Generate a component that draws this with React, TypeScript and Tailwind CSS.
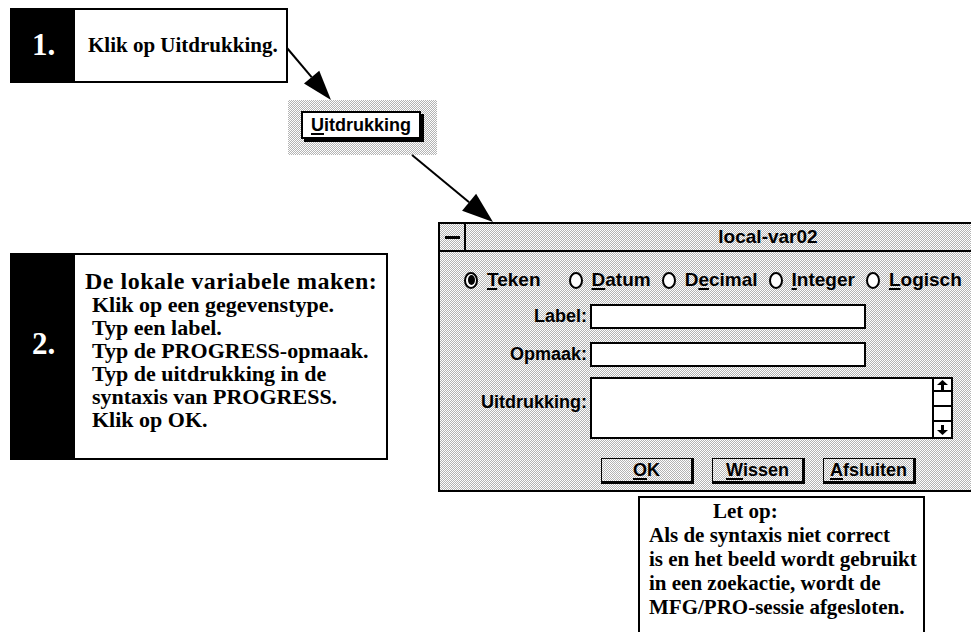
import React from "react";

const serif = "font-['Liberation_Serif','Times_New_Roman',serif] font-bold";
const sans = "font-['Liberation_Sans',Arial,sans-serif] font-bold";
const stipple =
  "bg-[image:repeating-conic-gradient(#b4b4b4_0_25%,#ffffff_0_50%)] bg-[length:2px_2px]";

function Radio({ checked }: { checked?: boolean }) {
  return (
    <span className="flex h-[17px] w-[14px] items-center justify-center rounded-[50%] border-2 border-black bg-white">
      {checked && <span className="h-[10px] w-[7px] rounded-[50%] bg-black" />}
    </span>
  );
}

function RadioItem({
  checked,
  pre,
  key1,
  post,
  className = "",
}: {
  checked?: boolean;
  pre?: string;
  key1: string;
  post: string;
  className?: string;
}) {
  return (
    <div className={`flex items-center gap-[9px] ${className}`}>
      <Radio checked={checked} />
      <span>
        {pre}
        <span className="underline decoration-2 underline-offset-2">{key1}</span>
        {post}
      </span>
    </div>
  );
}

function DlgButton({ k, rest }: { k: string; rest: string }) {
  return (
    <button
      className={`flex h-[26px] w-[93px] items-center justify-center border border-r-[3px] border-b-[3px] border-black ${stipple}`}
    >
      <span className="underline decoration-2 underline-offset-2">{k}</span>
      {rest}
    </button>
  );
}

function Arrow({ x1, y1, x2, y2, len = 30, half = 10 }: { x1: number; y1: number; x2: number; y2: number; len?: number; half?: number }) {
  const dx = x2 - x1;
  const dy = y2 - y1;
  const d = Math.hypot(dx, dy);
  const ux = dx / d;
  const uy = dy / d;
  const bx = x2 - ux * len;
  const by = y2 - uy * len;
  const px = -uy * half;
  const py = ux * half;
  return (
    <g>
      <line x1={x1} y1={y1} x2={bx} y2={by} stroke="black" strokeWidth={2} />
      <polygon points={`${x2},${y2} ${bx + px},${by + py} ${bx - px},${by - py}`} fill="black" />
    </g>
  );
}

export default function App() {
  return (
    <div className="relative h-[632px] w-[971px] overflow-hidden bg-white text-black">
      {/* stap 1 */}
      <div className="absolute left-[10px] top-[8px] flex h-[75px] w-[278px] border-2 border-black">
        <div className={`flex w-[63px] items-center justify-center bg-black text-[31px] text-white ${serif}`}>1.</div>
        <div className={`flex flex-1 items-center whitespace-nowrap pl-[13px] text-[21px] ${serif}`}>Klik op Uitdrukking.</div>
      </div>

      {/* knop */}
      <div className={`absolute left-[288px] top-[100px] h-[55px] w-[149px] ${stipple}`}>
        <button
          className={`ml-[13px] mt-[11px] flex h-[28px] w-[120px] items-center justify-center border-2 border-black bg-white text-[18px] shadow-[3px_3px_0_#000] ${sans}`}
        >
          <span className="underline decoration-2 underline-offset-2">U</span>itdrukking
        </button>
      </div>

      {/* stap 2 */}
      <div className="absolute left-[10px] top-[253px] flex h-[207px] w-[378px] border-2 border-black">
        <div className={`flex w-[63px] items-center justify-center bg-black pb-[24px] text-[31px] text-white ${serif}`}>2.</div>
        <div className={`flex-1 pl-[10px] pt-[14px] leading-[23px] ${serif}`}>
          <p className="whitespace-nowrap text-[24px] leading-[24px] tracking-[0.5px]">De lokale variabele maken:</p>
          <div className="pl-[7px] text-[22px]">
            <p>Klik op een gegevenstype.</p>
            <p>Typ een label.</p>
            <p>Typ de PROGRESS-opmaak.</p>
            <p>Typ de uitdrukking in de</p>
            <p>syntaxis van PROGRESS.</p>
            <p>Klik op OK.</p>
          </div>
        </div>
      </div>

      {/* dialoog */}
      <div className={`absolute left-[438px] top-[222px] h-[270px] w-[670px] border-2 border-black text-[18px] ${sans} ${stipple}`}>
        <div className="flex h-[28px] border-b-2 border-black">
          <div className="flex w-[26px] items-center justify-center border-r-2 border-black">
            <span className="h-[3px] w-[15px] bg-black" />
          </div>
          <div className="flex flex-1 items-center justify-center pr-[36px] text-[19px]">local-var02</div>
        </div>

        <div className="mt-[16px] flex h-[24px] items-center gap-[11px] pl-[24px] text-[19px]">
          <RadioItem checked key1="T" post="eken" className="mr-[17px]" />
          <RadioItem key1="D" post="atum" />
          <RadioItem pre="D" key1="e" post="cimal" />
          <RadioItem key1="I" post="nteger" />
          <RadioItem key1="L" post="ogisch" />
        </div>

        <div className="mt-[12px] flex h-[25px] items-center gap-[3px]">
          <span className="w-[147px] text-right">Label:</span>
          <div className="h-[25px] w-[276px] border-2 border-black bg-white" />
        </div>
        <div className="mt-[13px] flex h-[25px] items-center gap-[3px]">
          <span className="w-[147px] text-right">Opmaak:</span>
          <div className="h-[25px] w-[276px] border-2 border-black bg-white" />
        </div>
        <div className="mt-[10px] flex h-[62px] items-center gap-[3px]">
          <span className="w-[147px] pb-[12px] text-right">Uitdrukking:</span>
          <div className="flex h-[62px] w-[363px] border-2 border-black bg-white">
            <div className="flex-1" />
            <div className="flex w-[19px] flex-col border-l-2 border-black bg-white">
              <div className="flex h-[13px] items-center justify-center border-b-2 border-black">
                <svg width="11" height="10" viewBox="0 0 11 10">
                  <polygon points="5.5,0 11,5 0,5" fill="black" />
                  <rect x="4" y="5" width="3" height="5" fill="black" />
                </svg>
              </div>
              <div className="h-[15px] border-b-2 border-black" />
              <div className="flex-1" />
              <div className="flex h-[17px] items-center justify-center border-t-2 border-black">
                <svg width="11" height="10" viewBox="0 0 11 10">
                  <rect x="4" y="0" width="3" height="5" fill="black" />
                  <polygon points="0,5 11,5 5.5,10" fill="black" />
                </svg>
              </div>
            </div>
          </div>
        </div>

        <div className="mt-[19px] flex gap-[18px] pl-[161px]">
          <DlgButton k="O" rest="K" />
          <DlgButton k="W" rest="issen" />
          <DlgButton k="A" rest="fsluiten" />
        </div>
      </div>

      {/* let op */}
      <div className={`absolute left-[638px] top-[496px] h-[150px] w-[287px] border-2 border-black bg-white pl-[9px] pt-[1px] text-[21px] leading-[24px] ${serif}`}>
        <p className="pl-[64px]">Let op:</p>
        <p>Als de syntaxis niet correct</p>
        <p>is en het beeld wordt gebruikt</p>
        <p>in een zoekactie, wordt de</p>
        <p>MFG/PRO-sessie afgesloten.</p>
      </div>

      <svg className="pointer-events-none absolute inset-0" width="971" height="632">
        <Arrow x1={287} y1={48} x2={331} y2={100} len={30} half={10} />
        <Arrow x1={412} y1={155} x2={493} y2={222} len={31} half={11} />
      </svg>
    </div>
  );
}
